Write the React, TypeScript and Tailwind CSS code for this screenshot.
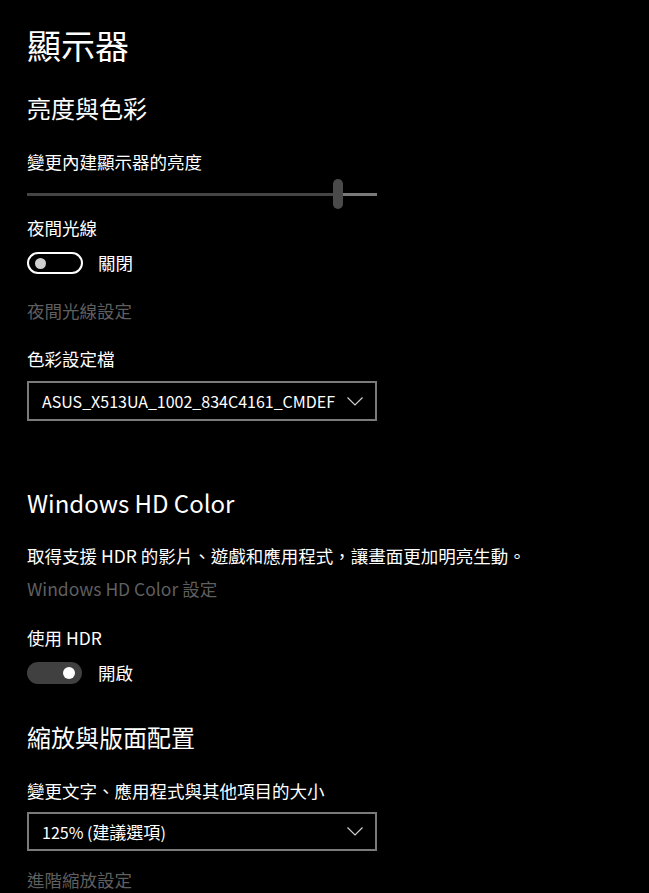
import React from "react";

const font = { fontFamily: '"Noto Sans CJK TC", "Noto Sans", sans-serif' };

function Chevron() {
  return (
    <svg width="16" height="9" viewBox="0 0 16 9" className="shrink-0">
      <polyline points="0.5,0.5 8,8 15.5,0.5" fill="none" stroke="#d0d0d0" strokeWidth="1.2" />
    </svg>
  );
}

function Dropdown({ children, h }: { children: React.ReactNode; h: string }) {
  return (
    <div className={`flex w-[350px] items-center justify-between border-2 border-[#7a7a7a] pl-[13px] pr-[12px] ${h}`}>
      <span className="text-[16px] leading-[24px] text-white">{children}</span>
      <Chevron />
    </div>
  );
}

function ToggleOff() {
  return (
    <div className="flex h-[22px] items-center">
      <div className="flex h-[22px] w-[56px] items-center rounded-full border-2 border-white pl-[6px]">
        <div className="h-[11px] w-[11px] rounded-full bg-[#d0d0d0]" />
      </div>
      <span className="ml-[15px] text-[17.5px] leading-[24px] text-white">關閉</span>
    </div>
  );
}

function ToggleOn() {
  return (
    <div className="flex h-[22px] items-center">
      <div className="flex h-[22px] w-[55px] items-center justify-end rounded-full bg-[#404040] pr-[7px]">
        <div className="h-[12px] w-[12px] rounded-full bg-white" />
      </div>
      <span className="ml-[16px] text-[17.5px] leading-[24px] text-white">開啟</span>
    </div>
  );
}

export default function App() {
  return (
    <div className="min-h-[893px] w-full overflow-hidden bg-black pl-[27px] pt-[23px] text-white" style={font}>
      <div className="text-[34px] leading-[44px]">顯示器</div>
      <div className="mt-[25px] text-[24px] leading-[32px]">亮度與色彩</div>
      <div className="mt-[26px] text-[17.5px] leading-[24px]">變更內建顯示器的亮度</div>
      <div className="relative mt-[5px] h-[30px] w-[350px]">
        <div className="absolute left-0 top-[14px] h-[3px] w-[306px] bg-[#454545]" />
        <div className="absolute left-[316px] top-[14px] h-[3px] w-[34px] bg-[#7a7a7a]" />
        <div className="absolute left-[306px] top-0 h-[30px] w-[10px] rounded-full bg-[#4a4a4a]" />
      </div>
      <div className="mt-[7px] text-[17.5px] leading-[24px]">夜間光線</div>
      <div className="mt-[12px]">
        <ToggleOff />
      </div>
      <div className="mt-[25px] text-[17.5px] leading-[24px] text-[#5f5f5f]">夜間光線設定</div>
      <div className="mt-[24px] text-[17.5px] leading-[24px]">色彩設定檔</div>
      <div className="mt-[10px]">
        <Dropdown h="h-[40px]">ASUS_X513UA_1002_834C4161_CMDEF</Dropdown>
      </div>
      <div className="mt-[66px] text-[24px] leading-[32px]">Windows HD Color</div>
      <div className="mt-[25px] text-[17.5px] leading-[24px]">取得支援 HDR 的影片、遊戲和應用程式，讓畫面更加明亮生動。</div>
      <div className="mt-[9px] text-[17.5px] leading-[24px] text-[#5f5f5f]">Windows HD Color 設定</div>
      <div className="mt-[25px] text-[17.5px] leading-[24px]">使用 HDR</div>
      <div className="mt-[12px]">
        <ToggleOn />
      </div>
      <div className="mt-[37px] text-[24px] leading-[32px]">縮放與版面配置</div>
      <div className="mt-[26px] text-[17.5px] leading-[24px]">變更文字、應用程式與其他項目的大小</div>
      <div className="mt-[9px]">
        <Dropdown h="h-[39px]">
          125% (<span className="text-[17px]">建議選項</span>)
        </Dropdown>
      </div>
      <div className="mt-[17px] text-[17.5px] leading-[24px] text-[#5f5f5f]">進階縮放設定</div>
    </div>
  );
}
